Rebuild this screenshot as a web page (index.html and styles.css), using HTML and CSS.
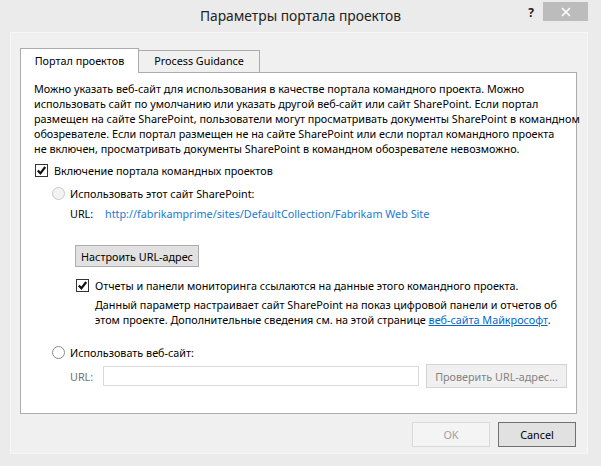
FILE: index.html
```html
<!DOCTYPE html>
<html lang="ru">
<head>
<meta charset="utf-8">
<title>Параметры портала проектов</title>
<link rel="stylesheet" href="styles.css">
</head>
<body>
<div class="window">
  <div class="titlebar">
    <div class="title">Параметры портала проектов</div>
    <div class="controls">
      <span class="help">?</span>
      <span class="close"><svg width="10" height="10" viewBox="0 0 10 10"><path d="M1 1 L9 9 M9 1 L1 9" stroke="#fff" stroke-width="1.6" fill="none"/></svg></span>
    </div>
  </div>
  <div class="panel">
    <div class="tabs">
      <div class="tab active">Портал проектов</div>
      <div class="tab">Process Guidance</div>
    </div>
    <div class="content">
      <p class="intro">Можно указать веб-сайт для использования в качестве портала командного проекта. Можно<br>использовать сайт по умолчанию или указать другой веб-сайт или сайт SharePoint. Если портал<br>размещен на сайте SharePoint, пользователи могут просматривать документы SharePoint в командном<br>обозревателе. Если портал размещен не на сайте SharePoint или если портал командного проекта<br>не включен, просматривать документы SharePoint в командном обозревателе невозможно.</p>
      <div class="row check-main">
        <span class="checkbox"><svg width="13" height="13" viewBox="0 0 13 13"><rect x="0.5" y="0.5" width="12" height="12" fill="#fff" stroke="#333"/><path d="M2.8 6.4 L5.4 9.3 L10.2 3" stroke="#111" stroke-width="2.2" fill="none"/></svg></span>
        <span>Включение портала командных проектов</span>
      </div>
      <div class="row option first">
        <span class="radio disabled"></span>
        <span>Использовать этот сайт SharePoint:</span>
      </div>
      <div class="row url-row">
        <span class="url-label">URL:</span>
        <span class="link">http://fabrikamprime/sites/DefaultCollection/Fabrikam Web Site</span>
      </div>
      <button class="btn configure">Настроить URL-адрес</button>
      <div class="row check-sub">
        <span class="checkbox"><svg width="13" height="13" viewBox="0 0 13 13"><rect x="0.5" y="0.5" width="12" height="12" fill="#fff" stroke="#333"/><path d="M2.8 6.4 L5.4 9.3 L10.2 3" stroke="#111" stroke-width="2.2" fill="none"/></svg></span>
        <span>Отчеты и панели мониторинга ссылаются на данные этого командного проекта.</span>
      </div>
      <p class="note">Данный параметр настраивает сайт SharePoint на показ цифровой панели и отчетов об<br>этом проекте. Дополнительные сведения см. на этой странице <a class="ms-link" href="#">веб-сайта Майкрософт</a>.</p>
      <div class="row option second">
        <span class="radio"></span>
        <span>Использовать веб-сайт:</span>
      </div>
      <div class="row web-row">
        <span class="url-label muted">URL:</span>
        <span class="input"></span>
        <button class="btn disabled check-url">Проверить URL-адрес...</button>
      </div>
    </div>
    <div class="actions">
      <button class="btn disabled action">OK</button>
      <button class="btn default action">Cancel</button>
    </div>
  </div>
</div>
</body>
</html>
```
FILE: styles.css
```css
* { box-sizing: border-box; }
html, body { margin: 0; padding: 0; }
body {
  background: #ebebeb;
  font-family: "Noto Sans", "Open Sans", sans-serif;
  font-size: 10.8px;
  color: #000;
}
.window {
  width: 601px;
  height: 466px;
  background: #ebebeb;
  overflow: hidden;
}
.titlebar {
  height: 32px;
  display: grid;
  grid-template-columns: 1fr auto 1fr;
  align-items: start;
}
.title {
  grid-column: 2;
  font-size: 13.8px;
  line-height: 20px;
  padding-top: 6px;
  color: #222;
  white-space: nowrap;
}
.controls {
  grid-column: 3;
  justify-self: end;
  display: flex;
  align-items: flex-start;
  padding-right: 13px;
  padding-top: 2px;
}
.help {
  font-weight: bold;
  font-size: 12px;
  line-height: 14px;
  color: #222;
  margin-top: 4px;
  margin-right: 9px;
}
.close {
  width: 45px;
  height: 19px;
  background: #bcbcbc;
  display: flex;
  align-items: center;
  justify-content: center;
}
.close svg { display: block; }
.panel {
  margin-left: 10px;
  width: 578px;
  height: 422px;
  background: #f0f0f0;
  border: 1px solid #f6f6f6;
  padding: 15px 10px 0 9px;
}
.tabs {
  display: flex;
  align-items: flex-end;
  height: 24px;
}
.tab {
  height: 22px;
  line-height: 20px;
  padding: 0;
  border: 1px solid #acacac;
  border-bottom: none;
  background: #f0f0f0;
  width: 121px;
  text-align: center;
  color: #000;
  white-space: nowrap;
}
.tab.active {
  height: 25px;
  width: 119px;
  line-height: 24px;
  background: #fff;
  margin-bottom: -1px;
  position: relative;
  z-index: 1;
}
.tab.active + .tab { border-left: none; }
.content {
  background: #fff;
  border: 1px solid #acacac;
  height: 342px;
  line-height: 15px;
}
.intro {
  margin: 0;
  padding: 8px 0 0 13px;
  white-space: nowrap;
}
.row {
  display: flex;
  align-items: center;
  height: 15px;
  white-space: nowrap;
}
.checkbox { width: 13px; height: 13px; flex: none; }
.checkbox svg { display: block; }
.check-main { margin-top: 7px; padding-left: 14px; gap: 6px; }
.option { padding-left: 31px; gap: 5px; }
.option.first { margin-top: 8px; }
.option.second { margin-top: 18px; }
.radio {
  width: 13px;
  height: 13px;
  border-radius: 50%;
  border: 1px solid #8a8a8a;
  background: #fff;
  flex: none;
}
.radio.disabled {
  border-color: #c8c8c8;
  background: #f3f3f3;
}
.url-row { margin-top: 5px; padding-left: 49px; }
.url-label { width: 35px; flex: none; }
.url-label.muted { color: #6d6d6d; width: 33px; }
.link { color: #1a7bd0; }
.btn {
  font-family: inherit;
  font-size: 10.8px;
  line-height: 15px;
  padding: 0;
  margin: 0;
  background: #e1e1e1;
  border: 1px solid #adadad;
  color: #000;
  border-radius: 0;
  white-space: nowrap;
}
.configure {
  display: block;
  margin: 24px 0 0 54px;
  width: 124px;
  height: 22px;
}
.check-sub { margin-top: 11px; padding-left: 55px; gap: 6px; }
.note {
  margin: 4px 0 0;
  padding-left: 74px;
  white-space: nowrap;
}
.ms-link { color: #0066cc; text-decoration: underline; }
.web-row {
  margin-top: 4px;
  height: 24px;
  padding-left: 49px;
}
.input {
  width: 316px;
  height: 20px;
  background: #fff;
  border: 1px solid #d9d9d9;
  flex: none;
}
.btn.disabled {
  background: #f0f0f0;
  border-color: #d3d3d3;
  color: #838383;
}
.check-url {
  margin-left: 7px;
  width: 141px;
  height: 24px;
}
.actions {
  display: flex;
  justify-content: flex-end;
  gap: 8px;
  margin-top: 8px;
  padding-right: 1px;
}
.action {
  width: 78px;
  height: 25px;
}
.btn.default {
  border-color: #707070;
  background: #e1e1e1;
}
.btn.action.disabled { background: #f4f4f4; border-color: #d9d9d9; color: #a0a0a0; }
```
